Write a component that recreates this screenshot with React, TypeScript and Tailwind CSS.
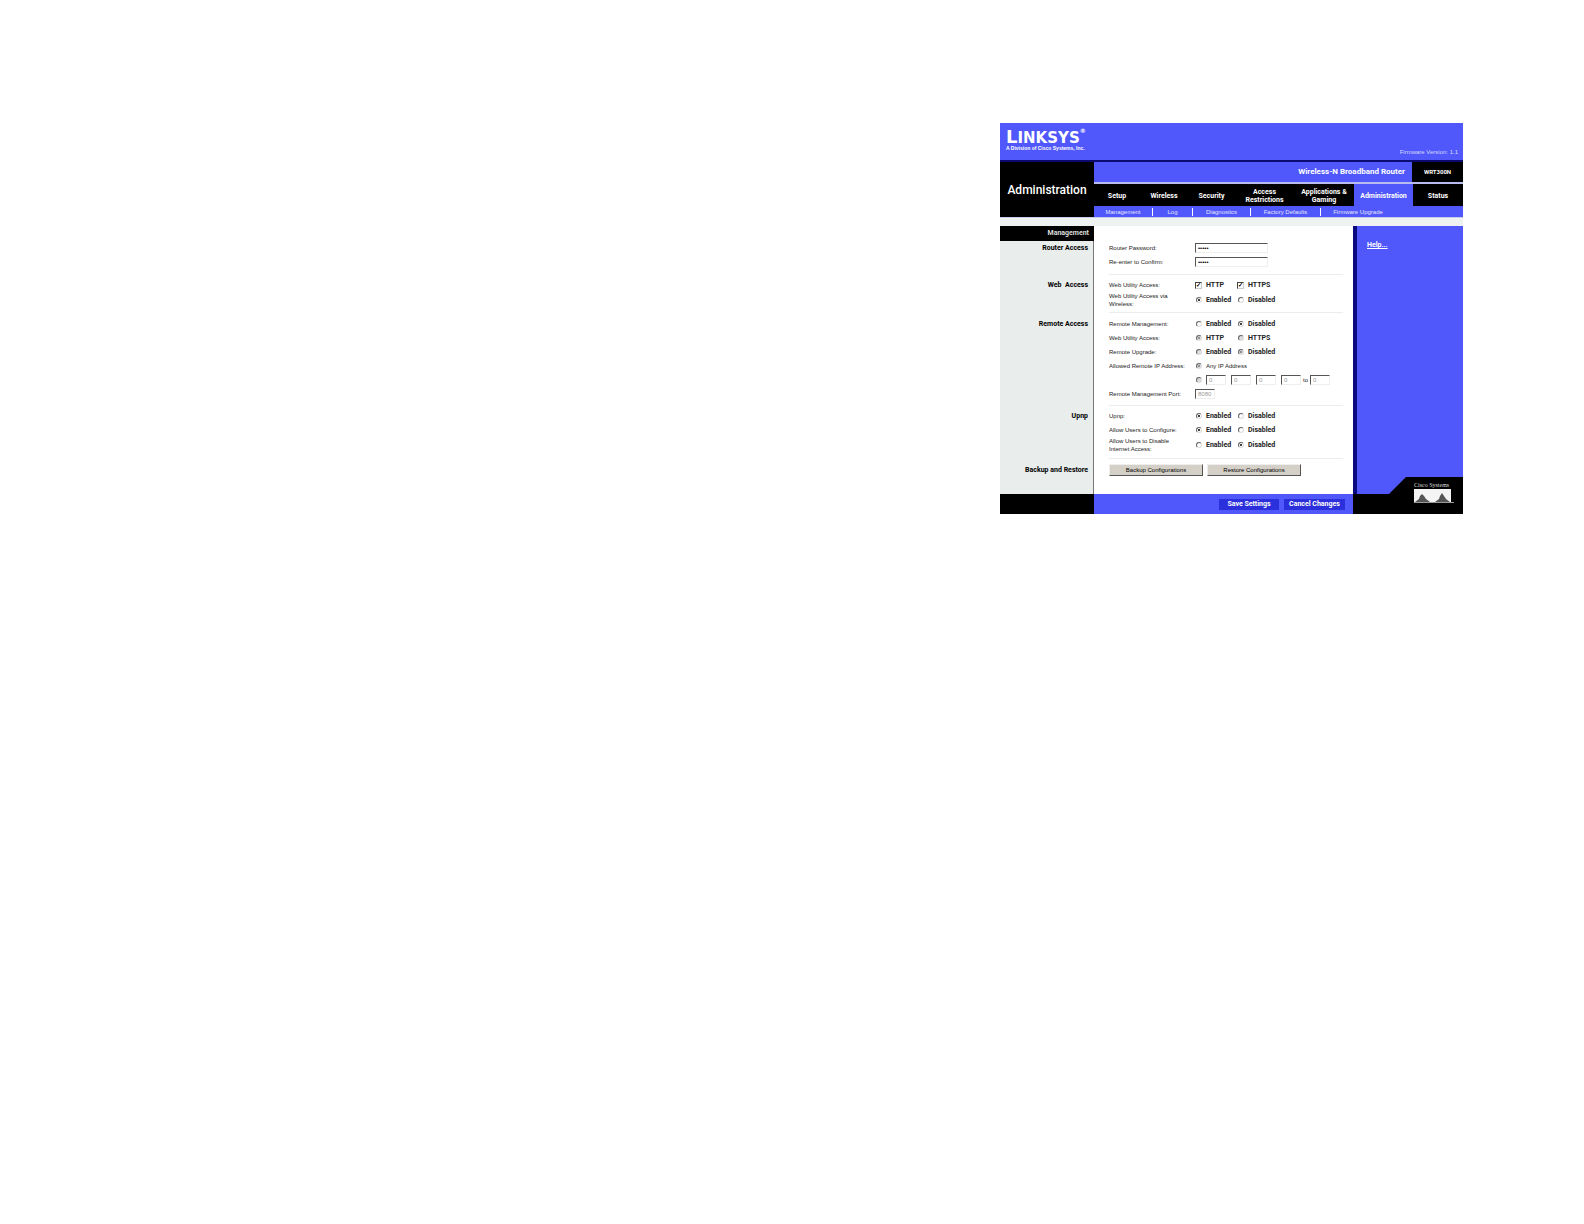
import type { ReactNode } from "react";

const NAV = [
    { label: "Setup", width: "w-[46px]" },
    { label: "Wireless", width: "w-[48px]" },
    { label: "Security", width: "w-[47px]" },
    { label: "Access Restrictions", width: "w-[59px]" },
    { label: "Applications & Gaming", width: "w-[60px]" },
    { label: "Administration", width: "w-[59px]", active: true },
    { label: "Status", width: "flex-1" },
];

const SUB_NAV = [
    { label: "Management", width: "w-[59px]" },
    { label: "Log", width: "w-[40px]" },
    { label: "Diagnostics", width: "w-[58px]" },
    { label: "Factory Defaults", width: "w-[70px]" },
    { label: "Firmware Upgrade", width: "w-[74px]" },
];

const bold = "font-[Roboto,sans-serif] text-[7px] font-bold";

function Section({ title, className, children }: { title: string; className: string; children: ReactNode }) {
    return (
        <section className="flex">
            <h2 className={`w-[94px] shrink-0 border-r border-[#777] bg-[#e9edec] pr-[5px] text-right leading-[14px] text-black ${bold} ${className}`}>
                {title}
            </h2>
            <div className="flex-1 pr-[10px] pl-[15px]">
                <div className={`border-b border-[#ececec] ${className}`}>{children}</div>
            </div>
        </section>
    );
}

function Row({ label, children }: { label: string; children: ReactNode }) {
    return (
        <div className="flex min-h-[14px] items-center">
            <span className="w-[86px] shrink-0 leading-[8px] whitespace-pre">{label}</span>
            {children}
        </div>
    );
}

type OptionProps = { name: string; label: string; checked?: boolean; disabled?: boolean; plain?: boolean };

function Radio({ name, label, checked, disabled, plain }: OptionProps) {
    return (
        <label className={`flex items-center gap-1 ${plain ? "" : `w-[42px] ${bold}`}`}>
            <input
                type="radio"
                name={name}
                defaultChecked={checked}
                disabled={disabled}
                className="ml-px flex size-[6px] shrink-0 appearance-none items-center justify-center rounded-full border border-[#ddd] border-t-[#666] border-l-[#666] bg-white before:size-[2px] before:rounded-full checked:before:bg-black disabled:bg-[#ddd] disabled:checked:before:bg-[#777]"
            />
            <span>{label}</span>
        </label>
    );
}

function Check({ name, label }: OptionProps) {
    return (
        <label className={`flex w-[42px] items-center gap-1 ${bold}`}>
            <input
                type="checkbox"
                name={name}
                defaultChecked
                className="flex size-[7px] shrink-0 appearance-none items-center justify-center border border-[#ccc] border-t-[#444] border-l-[#444] bg-white text-[6px] leading-[6px] font-bold text-black checked:before:content-['✓']"
            />
            {label}
        </label>
    );
}

function Toggle({ name, on, disabled }: { name: string; on: boolean; disabled?: boolean }) {
    return (
        <>
            <Radio name={name} label="Enabled" checked={on} disabled={disabled} />
            <Radio name={name} label="Disabled" checked={!on} disabled={disabled} />
        </>
    );
}

function Field({ label, value, type = "text", width, disabled }: { label: string; value: string; type?: string; width: string; disabled?: boolean }) {
    return (
        <input
            type={type}
            aria-label={label}
            defaultValue={value}
            disabled={disabled}
            className={`h-[10px] border border-[#eee] border-t-[#555] border-l-[#555] bg-white px-0.5 text-[6px] leading-[8px] text-black disabled:text-[#999] ${width}`}
        />
    );
}

function CiscoCorner() {
    return (
        <svg viewBox="0 0 110 37" className="block w-full bg-[#5058fc]" role="img" aria-label="Cisco Systems">
            <path d="M0 0H4V17H0Z" fill="#0a0a80" />
            <path d="M0 17H36L53 0H110V37H0Z" fill="#000" />
            <text x="61" y="10" fill="#ddd" fontSize="6" fontFamily="Liberation Serif, serif">Cisco Systems</text>
            <path d="M61 12H98V25H61Z" fill="#f4f4f4" />
            <path d="M62 25L66 22L67 19L69 17L71 19L73 22L77 25ZM82 25L86 22L87 19L89 16L91 19L93 22L97 25Z" fill="#555" />
            <path d="M61 25.5H101" stroke="#999" />
        </svg>
    );
}

export default function App() {
    return (
        <div className="grid min-h-screen grid-cols-[1000fr_463fr_121fr] items-start bg-white pt-[123px] font-['Liberation_Sans',Arial,sans-serif] text-[6px] leading-[8px] text-[#222]">
            <div className="col-start-2">
                <header>
                    <div className="flex h-[37px] items-end justify-between bg-[#5058fc] pr-[5px] pl-[6px] text-white">
                        <div className="pb-[9px] font-bold">
                            <div className="flex items-baseline font-['DejaVu_Sans',sans-serif] text-[15px] leading-[14px]">
                                <span className="text-[18px]">L</span>
                                <span>INKSYS</span>
                                <sup className="self-start text-[6px] leading-[8px]">®</sup>
                            </div>
                            <div className="text-[5px] leading-[6px]">A Division of Cisco Systems, Inc.</div>
                        </div>
                        <span className="pb-1 text-[#d5d8ff]">Firmware Version: 1.1</span>
                    </div>

                    <div className="flex border-t-2 border-[#0a0a70] bg-black text-white">
                        <h1 className="flex w-[94px] shrink-0 items-center justify-center font-[Roboto,sans-serif] text-[12px] font-medium">
                            Administration
                        </h1>
                        <div className="flex-1">
                            <div className="flex h-[20px] items-center bg-[#5058fc]">
                                <span className="flex-1 pr-[7px] text-right font-[Roboto,sans-serif] text-[8px] font-bold">
                                    Wireless-N Broadband Router
                                </span>
                                <span className="flex w-[51px] items-center justify-center self-stretch bg-black font-[Roboto,sans-serif] text-[6px] font-bold">
                                    WRT300N
                                </span>
                            </div>
                            <nav className="flex h-[24px] border-t-2 border-[#b8bcf0]">
                                {NAV.map((item) => (
                                    <a
                                        key={item.label}
                                        href="#"
                                        className={`flex items-center justify-center px-1 pt-0.5 text-center leading-[8px] ${bold} ${item.width} ${item.active ? "bg-[#5058fc]" : ""}`}
                                    >
                                        {item.label}
                                    </a>
                                ))}
                            </nav>
                            <nav className="flex h-[11px] items-center bg-[#5058fc]">
                                {SUB_NAV.map((item, i) => (
                                    <a
                                        key={item.label}
                                        href="#"
                                        className={`text-center whitespace-nowrap text-[#e4e6ff] ${item.width} ${i < SUB_NAV.length - 1 ? "border-r border-white" : ""}`}
                                    >
                                        {item.label}
                                    </a>
                                ))}
                            </nav>
                        </div>
                    </div>
                    <div className="h-[9px] border-t border-[#c8ccf0] bg-[#eef2f1]" />
                </header>

                <div className="flex">
                    <form className="flex flex-1 flex-col">
                        <div className="flex">
                            <div className={`h-[15px] w-[94px] bg-black pr-[5px] text-right leading-[15px] text-[#ddd] ${bold}`}>Management</div>
                        </div>

                        <Section title="Router Access" className="pb-[5px]">
                            <Row label="Router Password:">
                                <Field label="Router Password" type="password" value="admin" width="w-[73px]" />
                            </Row>
                            <Row label="Re-enter to Confirm:">
                                <Field label="Re-enter to Confirm" type="password" value="admin" width="w-[73px]" />
                            </Row>
                        </Section>

                        <Section title="Web  Access" className="pt-[3px] pb-1 whitespace-pre">
                            <Row label="Web Utility Access:">
                                <Check name="web-http" label="HTTP" />
                                <Check name="web-https" label="HTTPS" />
                            </Row>
                            <Row label={"Web Utility Access via\nWireless:"}>
                                <Toggle name="wireless" on />
                            </Row>
                        </Section>

                        <Section title="Remote Access" className="pt-1 pb-1">
                            <Row label="Remote Management:">
                                <Toggle name="remote" on={false} />
                            </Row>
                            <Row label="Web Utility Access:">
                                <Radio name="remote-web" label="HTTP" checked disabled />
                                <Radio name="remote-web" label="HTTPS" disabled />
                            </Row>
                            <Row label="Remote Upgrade:">
                                <Toggle name="upgrade" on={false} disabled />
                            </Row>
                            <Row label="Allowed Remote IP Address:">
                                <Radio name="ip" label="Any IP Address" checked disabled plain />
                            </Row>
                            <Row label="">
                                <Radio name="ip" label="" disabled plain />
                                <div className="flex items-center gap-[5px]">
                                    {[1, 2, 3, 4].map((n) => (
                                        <Field key={n} label={`IP address part ${n}`} value="0" width="w-[20px]" disabled />
                                    ))}
                                </div>
                                <span className="px-[2px]">to</span>
                                <Field label="IP address range end" value="0" width="w-[20px]" disabled />
                            </Row>
                            <Row label="Remote Management Port:">
                                <Field label="Remote Management Port" value="8080" width="w-[20px]" disabled />
                            </Row>
                        </Section>

                        <Section title="Upnp" className="pt-[3px] pb-[5px]">
                            <Row label="Upnp:">
                                <Toggle name="upnp" on />
                            </Row>
                            <Row label="Allow Users to Configure:">
                                <Toggle name="configure" on />
                            </Row>
                            <Row label={"Allow Users to Disable\nInternet Access:"}>
                                <Toggle name="disable-internet" on={false} />
                            </Row>
                        </Section>

                        <section className="flex">
                            <h2 className={`w-[94px] border-r border-[#777] bg-[#e9edec] pt-1 pr-[5px] text-right leading-[14px] text-black ${bold}`}>
                                Backup and Restore
                            </h2>
                            <div className="flex flex-1 gap-1 pt-[5px] pb-[18px] pl-[15px]">
                                {["Backup Configurations", "Restore Configurations"].map((text) => (
                                    <button
                                        key={text}
                                        type="button"
                                        className="h-[12px] w-[94px] border border-[#eee] border-r-[#555] border-b-[#555] bg-[#d4d0c8] leading-[8px] text-black"
                                    >
                                        {text}
                                    </button>
                                ))}
                            </div>
                        </section>

                        <div className="flex h-[20px] bg-[#5058fc]">
                            <div className="w-[94px] bg-black" />
                            <div className="flex flex-1 items-center justify-end gap-[5px] pr-2">
                                <button type="submit" className={`h-[11px] w-[60px] bg-[#2b2fdc] text-white ${bold}`}>Save Settings</button>
                                <button type="reset" className={`h-[11px] w-[61px] bg-[#2b2fdc] text-white ${bold}`}>Cancel Changes</button>
                            </div>
                        </div>
                    </form>

                    <aside className="flex w-[110px] flex-col">
                        <div className="flex-1 border-l-4 border-[#0a0a80] bg-[#5058fc] pt-[15px] pl-[10px]">
                            <a href="#" className={`text-white underline ${bold}`}>Help...</a>
                        </div>
                        <CiscoCorner />
                    </aside>
                </div>
            </div>
        </div>
    );
}
